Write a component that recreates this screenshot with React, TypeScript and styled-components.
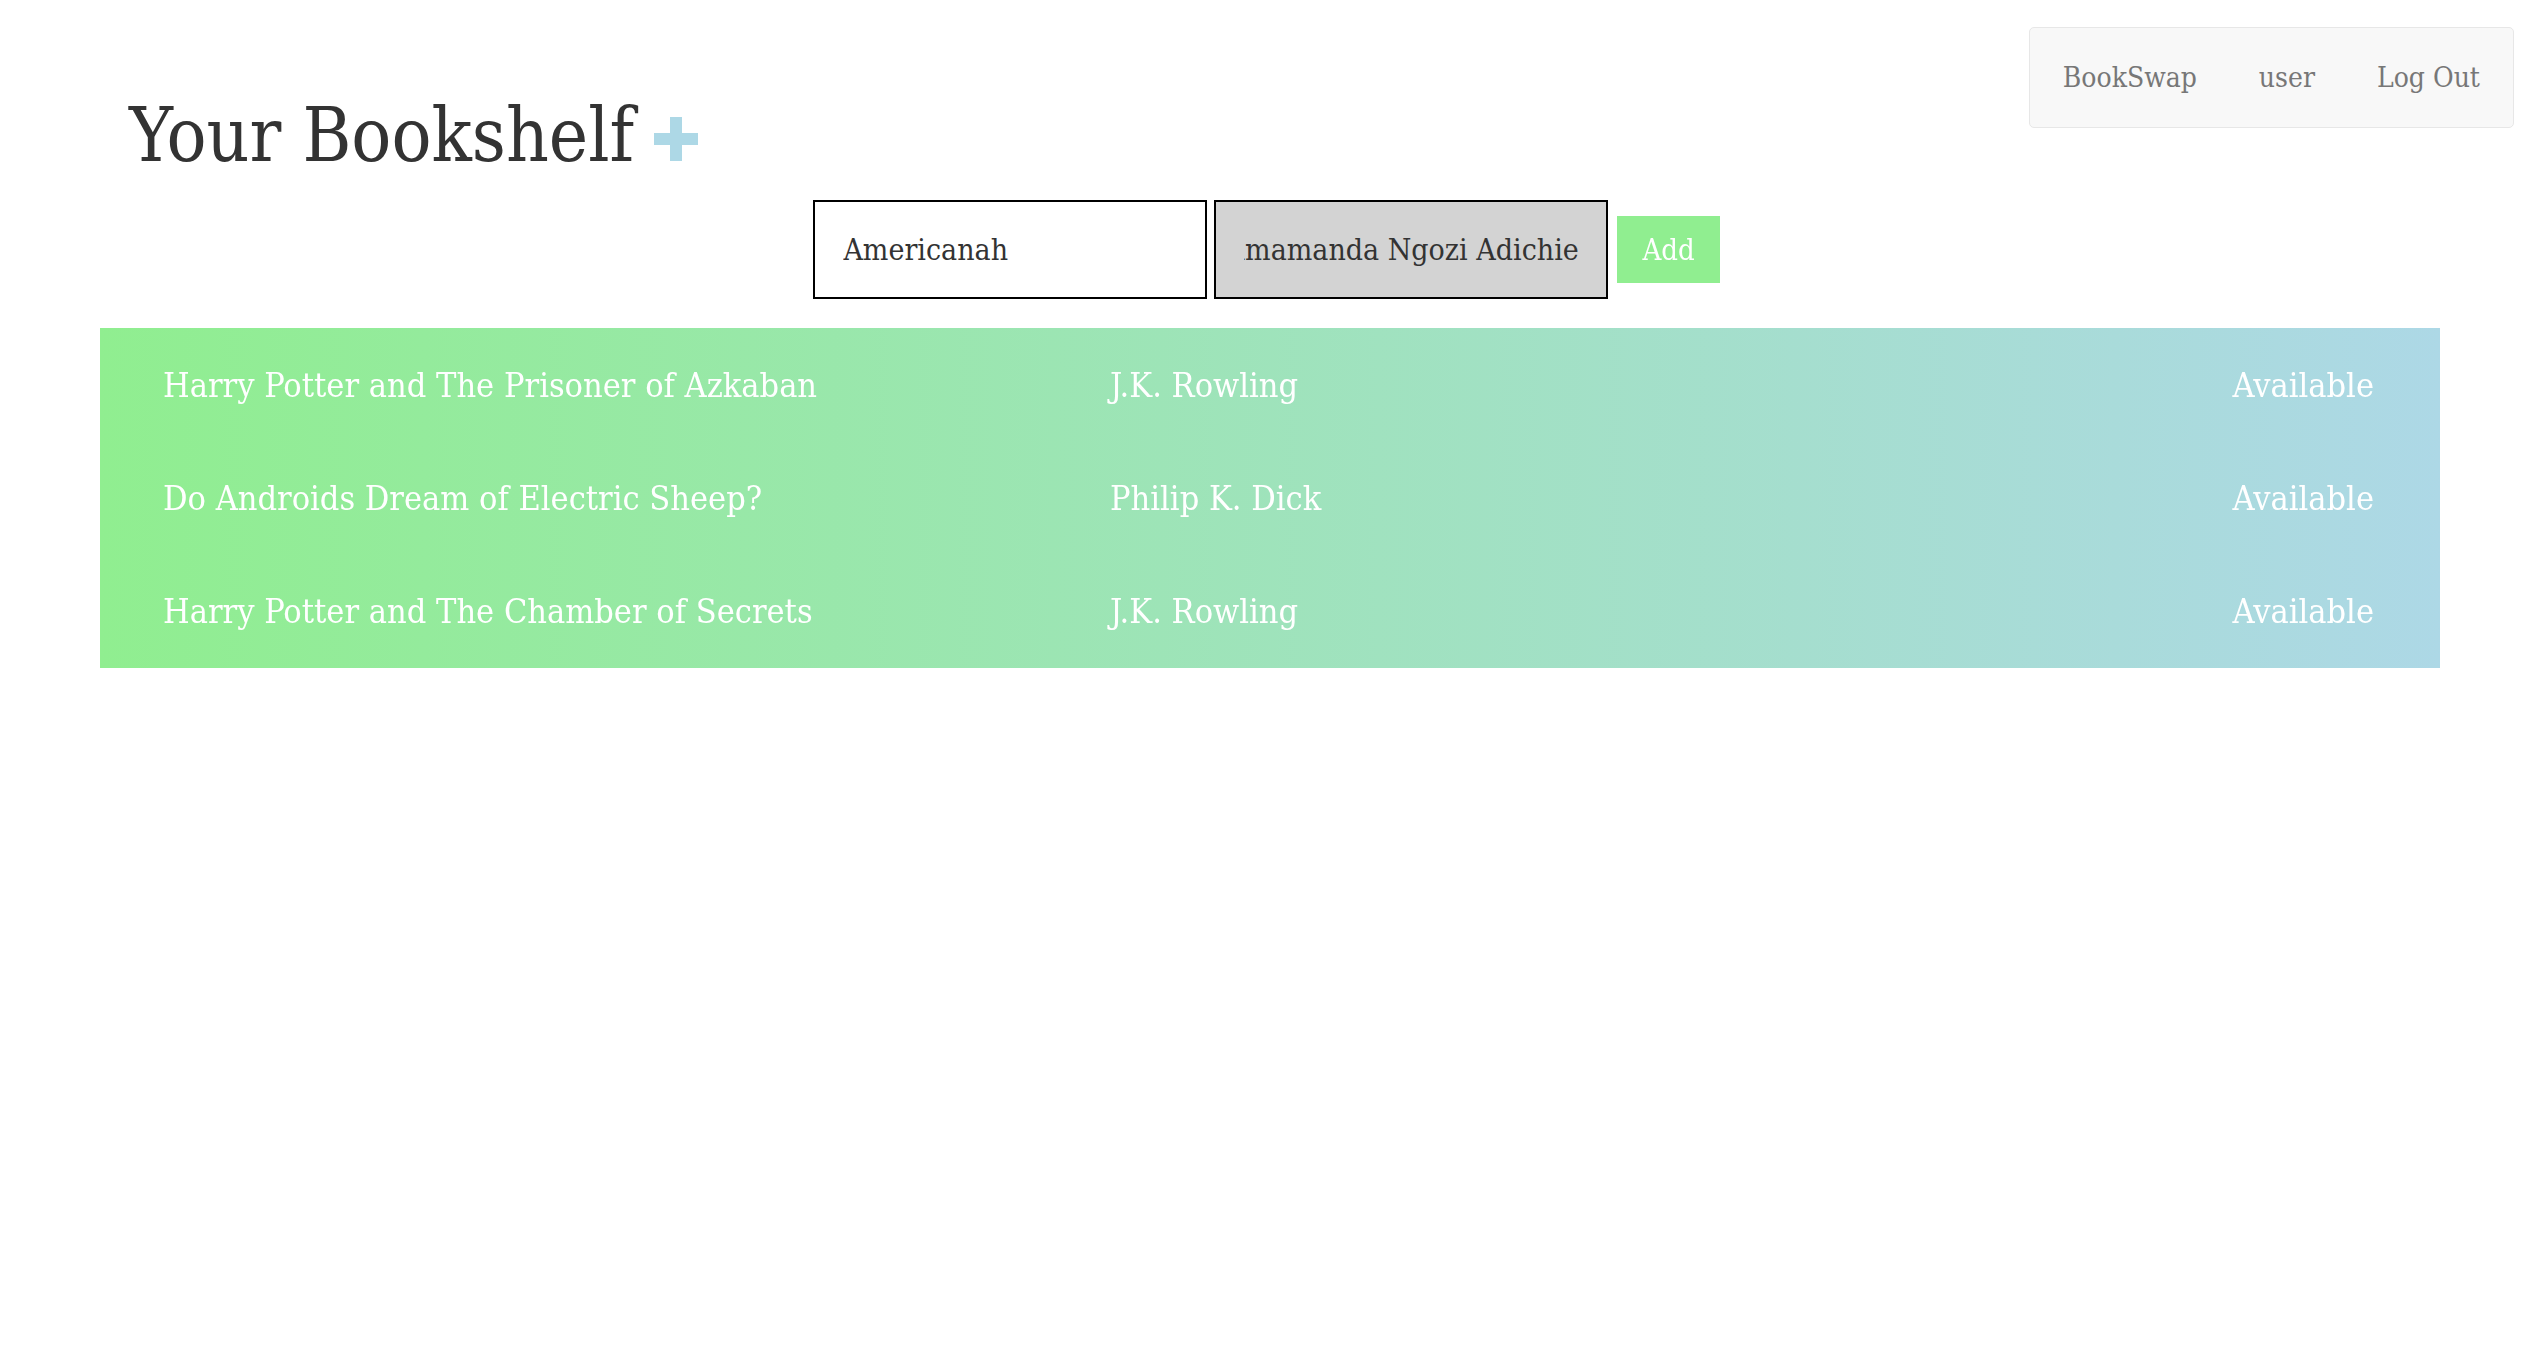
import { useEffect, useRef } from "react";
import styled, { createGlobalStyle } from "styled-components";

const GlobalStyle = createGlobalStyle`
  body {
    margin: 0;
    background: #fff;
    font-family: "Roboto Slab", "DejaVu Serif", "Liberation Serif", serif;
    font-stretch: condensed;
  }
`;

const books = [
  { title: "Harry Potter and The Prisoner of Azkaban", author: "J.K. Rowling", status: "Available" },
  { title: "Do Androids Dream of Electric Sheep?", author: "Philip K. Dick", status: "Available" },
  { title: "Harry Potter and The Chamber of Secrets", author: "J.K. Rowling", status: "Available" },
];

const PlusIcon = () => (
  <svg width="44" height="44" viewBox="0 0 44 44">
    <rect x="16" y="0" width="12" height="44" fill="#add8e6" />
    <rect x="0" y="16" width="44" height="12" fill="#add8e6" />
  </svg>
);

const App = () => {
  const authorRef = useRef<HTMLInputElement>(null);

  useEffect(() => {
    const el = authorRef.current;
    if (!el) return;
    el.focus();
    const len = el.value.length;
    el.setSelectionRange(len, len);
    el.scrollLeft = el.scrollWidth;
  }, []);

  return (
    <>
      <GlobalStyle />
      <Header>
        <Title>
          Your Bookshelf
          <PlusButton>
            <PlusIcon />
          </PlusButton>
        </Title>
        <Nav>
          <NavLink>BookSwap</NavLink>
          <NavLink>user</NavLink>
          <NavLink>Log Out</NavLink>
        </Nav>
      </Header>
      <AddForm onSubmit={(e) => e.preventDefault()}>
        <BookInput defaultValue="Americanah" />
        <BookInput ref={authorRef} defaultValue="Chimamanda Ngozi Adichie" />
        <AddButton type="submit">Add</AddButton>
      </AddForm>
      <Shelf>
        {books.map((b, i) => (
          <BookRow key={i}>
            <Cell>{b.title}</Cell>
            <Cell>{b.author}</Cell>
            <Cell $right>{b.status}</Cell>
          </BookRow>
        ))}
      </Shelf>
    </>
  );
};

export default App;

const Header = styled.div`
  display: flex;
  justify-content: space-between;
  align-items: flex-start;
  padding: 27px 19px 0 129px;
`;

const Title = styled.h1`
  margin: 72px 0 0;
  font-size: 74px;
  font-weight: 300;
  line-height: 72px;
  color: #333;
  display: flex;
  align-items: flex-end;
`;

const PlusButton = styled.span`
  display: inline-flex;
  margin: 0 0 10px 20px;
  cursor: pointer;
`;

const Nav = styled.div`
  display: flex;
  align-items: center;
  height: 99px;
  padding: 0 2px;
  background: #f8f8f8;
  border: 1px solid #e7e7e7;
  border-radius: 5px;
`;

const NavLink = styled.a`
  padding: 0 31px;
  font-size: 28px;
  font-weight: 300;
  color: #777;
  cursor: pointer;
`;

const AddForm = styled.form`
  display: flex;
  justify-content: center;
  align-items: center;
  gap: 7px;
  margin-top: 29px;
`;

const BookInput = styled.input`
  box-sizing: border-box;
  width: 394px;
  height: 99px;
  padding: 0 28px;
  border: 2px solid #000;
  background: #fff;
  color: #333;
  font-family: inherit;
  font-stretch: condensed;
  font-size: 30px;
  font-weight: 300;
  outline: none;

  &:focus {
    background: #d3d3d3;
  }
`;

const AddButton = styled.button`
  margin-left: 2px;
  height: 67px;
  padding: 0 25px;
  border: none;
  background: #90ee90;
  color: #fff;
  font-family: inherit;
  font-stretch: condensed;
  font-size: 29px;
  font-weight: 300;
  cursor: pointer;
`;

const Shelf = styled.div`
  margin: 29px 93px 0 100px;
  padding-bottom: 1px;
  background: linear-gradient(to right, #90ee90, #add8e6);
`;

const BookRow = styled.div`
  display: grid;
  grid-template-columns: 947px 1fr auto;
  align-items: center;
  height: 113px;
  padding: 0 66px 0 63px;
`;

const Cell = styled.div<{ $right?: boolean }>`
  color: #fff;
  font-size: 34px;
  font-weight: 300;
  text-align: ${({ $right }) => ($right ? "right" : "left")};
  white-space: nowrap;
`;
